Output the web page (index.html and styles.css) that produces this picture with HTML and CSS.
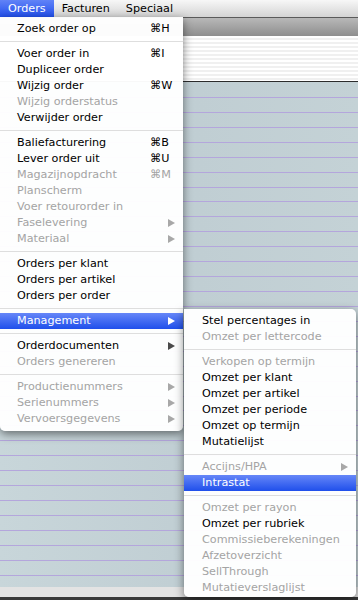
FILE: index.html
```html
<!DOCTYPE html>
<html>
<head>
	<meta charset="utf-8">
	<title>Orders</title>
	<link rel="stylesheet" href="styles.css">
</head>
<body>
<div class="screen">
	<ul class="menubar">
		<li class="active">Orders</li>
		<li>Facturen</li>
		<li>Speciaal</li>
	</ul>

	<div class="window">
		<div class="toolbar"></div>
		<div class="header"></div>
		<div class="rows"></div>
		<div class="status"></div>
	</div>

	<!-- Orders menu -->
	<ul class="menu main">
		<li class="item"><span class="label">Zoek order op</span><span class="key">⌘H</span></li>
		<li class="sep"></li>
		<li class="item"><span class="label">Voer order in</span><span class="key">⌘I</span></li>
		<li class="item"><span class="label">Dupliceer order</span><span class="key"></span></li>
		<li class="item"><span class="label">Wijzig order</span><span class="key">⌘W</span></li>
		<li class="item off"><span class="label">Wijzig orderstatus</span><span class="key"></span></li>
		<li class="item"><span class="label">Verwijder order</span><span class="key"></span></li>
		<li class="sep"></li>
		<li class="item"><span class="label">Baliefacturering</span><span class="key">⌘B</span></li>
		<li class="item"><span class="label">Lever order uit</span><span class="key">⌘U</span></li>
		<li class="item off"><span class="label">Magazijnopdracht</span><span class="key">⌘M</span></li>
		<li class="item off"><span class="label">Planscherm</span><span class="key"></span></li>
		<li class="item off"><span class="label">Voer retourorder in</span><span class="key"></span></li>
		<li class="item off"><span class="label">Faselevering</span><span class="key"><svg class="arrow" width="7" height="8" viewBox="0 0 7 8"><path d="M0 0L7 4L0 8Z"/></svg></span></li>
		<li class="item off"><span class="label">Materiaal</span><span class="key"><svg class="arrow" width="7" height="8" viewBox="0 0 7 8"><path d="M0 0L7 4L0 8Z"/></svg></span></li>
		<li class="sep"></li>
		<li class="item"><span class="label">Orders per klant</span><span class="key"></span></li>
		<li class="item"><span class="label">Orders per artikel</span><span class="key"></span></li>
		<li class="item"><span class="label">Orders per order</span><span class="key"></span></li>
		<li class="sep"></li>
		<li class="item hl"><span class="label">Management</span><span class="key"><svg class="arrow" width="7" height="8" viewBox="0 0 7 8"><path d="M0 0L7 4L0 8Z"/></svg></span></li>
		<li class="sep"></li>
		<li class="item"><span class="label">Orderdocumenten</span><span class="key"><svg class="arrow" width="7" height="8" viewBox="0 0 7 8"><path d="M0 0L7 4L0 8Z"/></svg></span></li>
		<li class="item off"><span class="label">Orders genereren</span><span class="key"></span></li>
		<li class="sep"></li>
		<li class="item off"><span class="label">Productienummers</span><span class="key"><svg class="arrow" width="7" height="8" viewBox="0 0 7 8"><path d="M0 0L7 4L0 8Z"/></svg></span></li>
		<li class="item off"><span class="label">Serienummers</span><span class="key"><svg class="arrow" width="7" height="8" viewBox="0 0 7 8"><path d="M0 0L7 4L0 8Z"/></svg></span></li>
		<li class="item off"><span class="label">Vervoersgegevens</span><span class="key"><svg class="arrow" width="7" height="8" viewBox="0 0 7 8"><path d="M0 0L7 4L0 8Z"/></svg></span></li>
	</ul>

	<!-- Management submenu -->
	<ul class="menu sub">
		<li class="item"><span class="label">Stel percentages in</span><span class="key"></span></li>
		<li class="item off"><span class="label">Omzet per lettercode</span><span class="key"></span></li>
		<li class="sep"></li>
		<li class="item off"><span class="label">Verkopen op termijn</span><span class="key"></span></li>
		<li class="item"><span class="label">Omzet per klant</span><span class="key"></span></li>
		<li class="item"><span class="label">Omzet per artikel</span><span class="key"></span></li>
		<li class="item"><span class="label">Omzet per periode</span><span class="key"></span></li>
		<li class="item"><span class="label">Omzet op termijn</span><span class="key"></span></li>
		<li class="item"><span class="label">Mutatielijst</span><span class="key"></span></li>
		<li class="sep"></li>
		<li class="item off"><span class="label">Accijns/HPA</span><span class="key"><svg class="arrow" width="7" height="8" viewBox="0 0 7 8"><path d="M0 0L7 4L0 8Z"/></svg></span></li>
		<li class="item hl"><span class="label">Intrastat</span><span class="key"></span></li>
		<li class="sep"></li>
		<li class="item off"><span class="label">Omzet per rayon</span><span class="key"></span></li>
		<li class="item"><span class="label">Omzet per rubriek</span><span class="key"></span></li>
		<li class="item off"><span class="label">Commissieberekeningen</span><span class="key"></span></li>
		<li class="item off"><span class="label">Afzetoverzicht</span><span class="key"></span></li>
		<li class="item off"><span class="label">SellThrough</span><span class="key"></span></li>
		<li class="item off"><span class="label">Mutatieverslaglijst</span><span class="key"></span></li>
	</ul>
</div>
</body>
</html>
```

FILE: styles.css
```css
*{margin: 0;padding: 0;}
ul{list-style: none;}
body{width: 358px;height: 600px;overflow: hidden;font-family: "DejaVu Sans", "Liberation Sans", sans-serif;font-size: 11.2px;color: #000;}

.screen{position: relative;height: 600px;display: flex;flex-direction: column;}

/* menu bar */
.menubar{display: flex;height: 17px;line-height: 17px;background: linear-gradient(#f7f7f7, #d4d4d4);border-bottom: 1px solid #5a5a5a;}
.menubar li{padding: 0 8px;}
.menubar li.active{background: linear-gradient(#6183f7, #2250ed);color: #fff;}

/* window behind the menus */
.window{flex: 1;display: flex;flex-direction: column;}
.window .toolbar{height: 18px;background: linear-gradient(#b8b8b8, #8e8e8e);}
.window .header{height: 45px;background: repeating-linear-gradient(#fff 0 2px, #f0f0f0 2px 4px);border-bottom: 1px solid #2c2c2c;}
.window .rows{
	flex: 1;
	background:
		repeating-linear-gradient(transparent 0 13.93px, #b4a6dc 13.93px 14.93px) 0 1px,
		linear-gradient(to right, #c8d6da, #c0ced3 55%, #c4d2d6);
}
.window .status{height: 10px;background: #e3e3e3;border-bottom: 3px solid #3a3a3a;}

/* menus */
.menu{
	position: absolute;
	background: rgba(255, 255, 255, 0.97);
	box-shadow: 0 3px 10px rgba(0, 0, 0, 0.5);
}
.menu.main{left: 0;top: 17px;width: 183px;padding: 4px 0;border-radius: 0 0 5px 5px;}
.menu.sub{left: 184px;top: 309px;width: 172px;padding: 4px 0 1px;border-radius: 0 5px 5px 5px;}

.menu .item{display: flex;height: 16px;line-height: 16px;padding-left: 17px;white-space: nowrap;}
.menu.sub .item{padding-left: 18px;}
.menu .item .label{flex: 1;}
.menu .item .key{width: 33px;}
.menu .item .arrow{display: block;margin: 4px 0 0 18px;fill: #4a4a4a;}
.menu .item.off{color: #a4a4a4;}
.menu .item.off .arrow{fill: #a8a8a8;}
.menu .item.hl{background: linear-gradient(#6687f8, #1f4feb);color: #fff;}
.menu .item.hl .arrow{fill: #fff;}

.menu .sep{height: 9px;background: linear-gradient(transparent 4px, #dedede 4px, #dedede 5px, transparent 5px);}
```
